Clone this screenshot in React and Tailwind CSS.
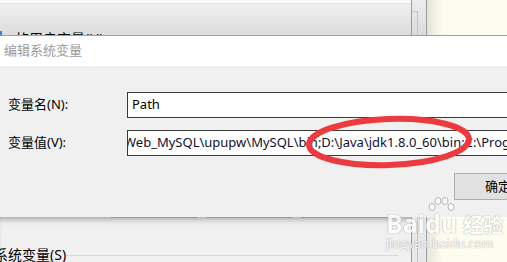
import React from 'react';

const font = { fontFamily: '"Noto Sans", "Noto Sans CJK SC", sans-serif' };

const Watermark = () => (
    <div className="absolute left-[386px] top-[206px] flex flex-col items-start pointer-events-none select-none opacity-80">
        <div className="relative flex items-end h-[30px]">
            <span className="text-[25px] font-bold leading-none text-white [text-shadow:0_0_1px_#9a9a9a,0_0_1px_#9a9a9a]" style={font}>
                Bai
            </span>
            <span className="relative text-[25px] font-bold leading-none text-white [text-shadow:0_0_1px_#9a9a9a,0_0_1px_#9a9a9a]" style={font}>
                du
                {/* paw */}
                <svg className="absolute left-[2px] -top-[14px]" width="28" height="16" viewBox="0 0 28 16">
                    <g fill="#fff" stroke="#a8a8a8" strokeWidth="1">
                        <ellipse cx="5" cy="10" rx="3" ry="3.5" />
                        <ellipse cx="11" cy="4" rx="3" ry="3.5" />
                        <ellipse cx="18" cy="4" rx="3" ry="3.5" />
                        <ellipse cx="24" cy="10" rx="3" ry="3.5" />
                    </g>
                </svg>
            </span>
            <span className="ml-[6px] text-[20px] font-bold leading-none text-white [text-shadow:0_0_1px_#9a9a9a,0_0_1px_#9a9a9a]" style={font}>
                经验
            </span>
        </div>
        <span className="mt-[2px] text-[12px] leading-none text-white tracking-[0.2px] [text-shadow:0_0_1px_#9a9a9a,0_0_1px_#9a9a9a]" style={font}>
            jingyan.baidu.com
        </span>
    </div>
);

const App = () => {
    return (
        <div className="relative w-[507px] h-[262px] overflow-hidden bg-[#f0f0f0] text-[13px]" style={font}>
            {/* window behind, top part */}
            <div className="flex h-[36px] border-b border-[#a0a0a0]">
                <div className="relative flex-1 border-t-[3px] border-[#fafafa]">
                    <div className="h-full overflow-hidden border-t border-[#e4e4e4] bg-gradient-to-b from-[#efefef] to-[#dcdcdc]">
                        <div className="pl-[15px] pt-[25px] text-[14px] leading-[20px] text-black">的用户变量(U)</div>
                    </div>
                    <div className="absolute left-0 bottom-0 w-[2px] h-[4px] bg-[#3b7dd8]" />
                </div>
                <div className="w-[16px] border-x border-[#9c9c9c] bg-gradient-to-b from-[#ececec] to-[#dcdcdc] pt-[11px]">
                    <div className="w-[6px] h-full border-r border-t border-[#c4c4c4]" />
                </div>
                <div className="w-[80px] bg-gradient-to-r from-[#e2e2d8] to-[#fdfdef] to-[20%]" />
            </div>

            {/* dialog title */}
            <div className="h-[30px] bg-white flex items-center pl-[4px] text-[#9b9b9b] text-[13px]">
                编辑系统变量
            </div>

            {/* dialog body */}
            <div className="h-[151px] bg-[#f0f0f0] pt-[26px]">
                <div className="flex items-center h-[26px]">
                    <div className="w-[127px] shrink-0 pl-[8px] text-black">变量名(N):</div>
                    <div className="w-[400px] shrink-0 h-[26px] border border-[#3a3a3a] bg-white flex items-center pl-[4px] text-black">
                        Path
                    </div>
                </div>
                <div className="flex items-center h-[26px] mt-[12px]">
                    <div className="w-[127px] shrink-0 pl-[8px] text-black">变量值(V):</div>
                    <div className="w-[400px] shrink-0 h-[26px] border border-[#3a3a3a] bg-white flex items-center overflow-hidden text-[#101030]">
                        <span className="whitespace-nowrap -ml-[4px]">Web_MySQL\upupw\MySQL\bin;D:\Java\jdk1.8.0_60\bin;C:\Program Files</span>
                    </div>
                </div>
                <div className="flex justify-end mt-[17px]">
                    <div className="w-[53px] h-[27px] border border-[#adadad] border-r-0 bg-[#e1e1e1] flex items-center pl-[30px] text-black whitespace-nowrap overflow-hidden">
                        确定
                    </div>
                </div>
            </div>

            {/* window behind, bottom part */}
            <div className="relative flex h-[45px] shadow-[inset_0_6px_6px_-4px_rgba(0,0,0,0.35)]">
                <div className="flex-1 flex flex-col overflow-hidden">
                    <div className="flex h-[6px]">
                        <div className="ml-[111px] w-[86px] border border-t-0 border-[#9a9a9a] bg-[#d0d0d0]" />
                        <div className="ml-[9px] w-[86px] border border-t-0 border-[#9a9a9a] bg-[#d0d0d0]" />
                        <div className="ml-[9px] w-[86px] border border-t-0 border-[#9a9a9a] bg-[#d0d0d0]" />
                    </div>
                    <div className="mt-[17px] h-px w-[398px] bg-[#d8d8d8]" />
                    <div className="flex items-center mt-[12px] -ml-[6px]">
                        <span className="text-[14px] leading-[16px] text-black">系统变量(S)</span>
                        <div className="flex-1 h-px bg-[#d8d8d8] mr-[13px]" />
                    </div>
                </div>
                <div className="w-[16px] border-x border-[#9c9c9c] bg-[#e8e8e8]">
                    <div className="w-[6px] h-full border-r border-[#c4c4c4]" />
                </div>
                <div className="w-[80px] bg-gradient-to-r from-[#e6e6dc] to-[#fdfdef] to-[20%]" />
            </div>

            {/* red ellipse mark */}
            <svg className="absolute left-[303px] top-[113px]" width="172" height="58" viewBox="0 0 172 58">
                <ellipse cx="86" cy="29" rx="80" ry="23" fill="none" stroke="#ec3b3f" strokeWidth="6" transform="rotate(-2 86 29)" />
            </svg>

            <Watermark />
        </div>
    );
};

export default App;
